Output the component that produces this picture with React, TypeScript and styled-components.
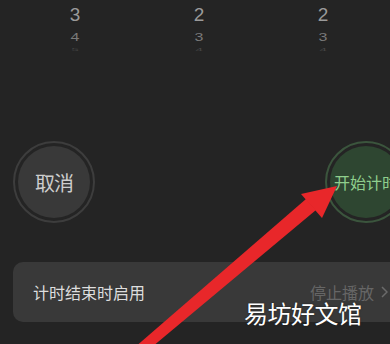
import styled, { createGlobalStyle } from 'styled-components';

const GlobalStyle = createGlobalStyle`
  html, body {
    margin: 0;
    padding: 0;
    background: #242424;
    overflow: hidden;
  }
  body {
    font-family: "Noto Sans CJK SC", "Noto Sans", sans-serif;
  }
`;

const Screen = styled.div`
  position: relative;
  width: 420px;
  height: 344px;
  padding: 0 13px;
  box-sizing: border-box;
  background: #242424;
`;

const Picker = styled.div`
  display: grid;
  grid-template-columns: repeat(3, 124px);
  height: 141px;
`;

const Wheel = styled.div`
  display: flex;
  flex-direction: column;
  align-items: center;
  padding-top: 5px;
  font-family: "Liberation Sans", Arial, sans-serif;
`;

// each row further down the wheel gets flatter and dimmer
const Digit = styled.span<{ $level: number }>`
  display: block;
  line-height: 1;
  font-size: ${(p) => [19, 16, 13][p.$level]}px;
  color: ${(p) => ['#9a9a9a', '#7a7a7a', '#474747'][p.$level]};
  margin-top: ${(p) => [0, 6, -3][p.$level]}px;
  transform: scaleY(${(p) => [1, 0.65, 0.3][p.$level]});
`;

const ButtonRow = styled.div`
  display: flex;
  justify-content: space-between;
  height: 121px;
`;

const RoundButton = styled.div<{ $green?: boolean }>`
  width: 82px;
  height: 82px;
  box-sizing: border-box;
  border-radius: 50%;
  border: 2px solid ${(p) => (p.$green ? '#3b553d' : '#3d3d3d')};
  padding: 3px;
`;

const RoundFace = styled.div<{ $green?: boolean }>`
  width: 100%;
  height: 100%;
  border-radius: 50%;
  background: ${(p) => (p.$green ? '#2e4631' : '#393939')};
  display: flex;
  align-items: center;
  justify-content: center;
  color: ${(p) => (p.$green ? '#8fcf8d' : '#cdcdcd')};
  font-size: ${(p) => (p.$green ? 16 : 20)}px;
  white-space: nowrap;
  letter-spacing: ${(p) => (p.$green ? 0 : -1)}px;
`;

const SettingCard = styled.div`
  height: 60px;
  border-radius: 10px;
  background: #393939;
  display: flex;
  align-items: center;
  justify-content: space-between;
  padding: 0 19px 0 20px;
`;

const SettingLabel = styled.span`
  color: #dedede;
  font-size: 16px;
`;

const SettingValue = styled.span`
  color: #666;
  font-size: 16px;
  display: flex;
  align-items: center;
  gap: 7px;
`;

const Chevron = styled.svg`
  width: 7px;
  height: 12px;
`;

const Arrow = styled.svg`
  position: absolute;
  left: 0;
  top: 0;
  width: 390px;
  height: 344px;
  pointer-events: none;
`;

const Watermark = styled.div`
  position: absolute;
  left: 244px;
  top: 295px;
  color: #fff;
  font-size: 24px;
  letter-spacing: -0.5px;
  text-shadow: 0 0 2px rgba(0, 0, 0, 0.5);
`;

const columns = [
  ['3', '4', '5'],
  ['2', '3', '4'],
  ['2', '3', '4'],
];

export default function App() {
  return (
    <>
      <GlobalStyle />
      <Screen>
        <Picker>
          {columns.map((col, i) => (
            <Wheel key={i}>
              {col.map((d, level) => (
                <Digit key={level} $level={level}>
                  {d}
                </Digit>
              ))}
            </Wheel>
          ))}
        </Picker>
        <ButtonRow>
          <RoundButton>
            <RoundFace>取消</RoundFace>
          </RoundButton>
          <RoundButton $green>
            <RoundFace $green>开始计时</RoundFace>
          </RoundButton>
        </ButtonRow>
        <SettingCard>
          <SettingLabel>计时结束时启用</SettingLabel>
          <SettingValue>
            停止播放
            <Chevron viewBox="0 0 7 12">
              <path d="M1 1l5 5-5 5" fill="none" stroke="#6a6a6a" strokeWidth="1.5" />
            </Chevron>
          </SettingValue>
        </SettingCard>
        <Arrow viewBox="0 0 390 344">
          <polygon points="134,348 146,352 316,210 306,199" fill="#e8272a" />
          <polygon points="337,186 301,194 322,218" fill="#e8272a" />
        </Arrow>
        <Watermark>易坊好文馆</Watermark>
      </Screen>
    </>
  );
}
